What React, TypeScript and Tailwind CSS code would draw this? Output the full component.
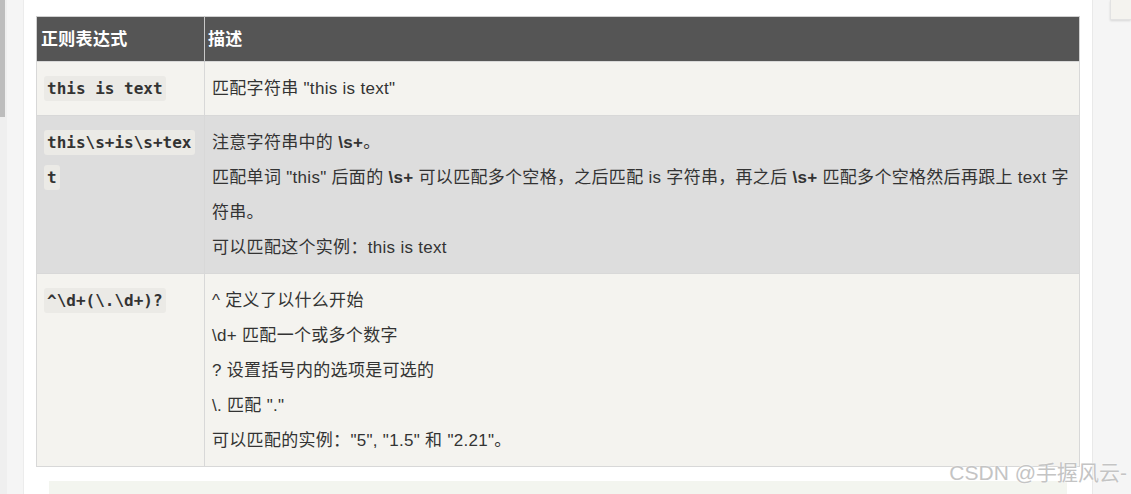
import type { ReactNode } from 'react';

const cjk = "font-['Liberation_Sans','Noto_Sans_CJK_SC',sans-serif]";

function Code({ children }: { children: ReactNode }) {
  return (
    <code className="rounded-[3px] bg-[#ebeae6] px-[3px] py-[3px] font-['DejaVu_Sans_Mono',monospace] text-[16px] font-bold tracking-normal text-[#333] [box-decoration-break:clone]">
      {children}
    </code>
  );
}

function B({ children }: { children: ReactNode }) {
  return <strong className="font-bold">{children}</strong>;
}

export default function App() {
  return (
    <div className={`relative flex h-[494px] w-[1131px] overflow-hidden bg-white ${cjk}`}>
      {/* left gutter with scrollbar */}
      <div className="flex w-[24px] shrink-0">
        <div className="w-[7px] bg-[#efefef]">
          <div className="h-[117px] w-[5px] bg-[#bdbdbd]" />
        </div>
        <div className="flex-1 border-r border-[#ececec] bg-[#f5f5f5]" />
      </div>

      {/* article */}
      <main className="min-w-0 flex-1 px-[12px]">
        <div className="h-[16px] overflow-hidden">
          <p className="-mt-[22px] pl-[4px] text-[16px] leading-[24px] text-[#333]">
            下表列出了一些正则表达式的实例及描述：
          </p>
        </div>

        <table className="w-full table-fixed border-collapse border border-[#d0d0d0] text-[17px] tracking-[0.3px] text-[#333]">
          <colgroup>
            <col className="w-[168px]" />
            <col />
          </colgroup>
          <thead>
            <tr className="h-[45px] bg-[#555555] text-left text-[17px] font-bold text-white">
              <th className="border-r border-[#c8c8c8] px-[4px] pt-[2px]">正则表达式</th>
              <th className="px-[3px] pt-[2px]">描述</th>
            </tr>
          </thead>
          <tbody className="leading-[35px]">
            <tr className="bg-[#f4f3ef]">
              <td className="border border-[#d8d8d8] px-[7px] py-[9px] align-top">
                <Code>this is text</Code>
              </td>
              <td className="border border-[#d8d8d8] px-[7px] py-[9px] align-top">匹配字符串 "this is text"</td>
            </tr>
            <tr className="bg-[#dddddd]">
              <td className="break-all border border-[#d8d8d8] pb-[8px] pl-[7px] pr-[10px] pt-[9px] align-top">
                <Code>this\s+is\s+text</Code>
              </td>
              <td className="border border-[#d8d8d8] px-[7px] pb-[8px] pt-[9px] align-top">
                <p>
                  注意字符串中的 <B>\s+</B>。
                </p>
                <p>
                  匹配单词 "this" 后面的 <B>\s+</B> 可以匹配多个空格，之后匹配 is 字符串，再之后 <B>\s+</B> 匹配多个空格然后再跟上 text 字符串。
                </p>
                <p>可以匹配这个实例：this is text</p>
              </td>
            </tr>
            <tr className="bg-[#f4f3ef]">
              <td className="border border-[#d8d8d8] px-[7px] pb-[8px] pt-[9px] align-top">
                <Code>^\d+(\.\d+)?</Code>
              </td>
              <td className="border border-[#d8d8d8] px-[7px] pb-[8px] pt-[9px] align-top">
                <p>^ 定义了以什么开始</p>
                <p>\d+ 匹配一个或多个数字</p>
                <p>? 设置括号内的选项是可选的</p>
                <p>\. 匹配 "."</p>
                <p>可以匹配的实例："5", "1.5" 和 "2.21"。</p>
              </td>
            </tr>
          </tbody>
        </table>

        <div className="mx-[13px] mt-[14px] h-[40px] bg-[#f3f5ef]" />
      </main>

      {/* right rail */}
      <aside className="w-[39px] shrink-0 border-l border-[#e9e9e9] bg-[#f5f5f5] pl-[17px]">
        <div className="h-[20px] w-full border-b border-l border-[#e2e2e2] bg-[#f4f3ef] shadow-[0_1px_2px_rgba(0,0,0,0.12)]" />
      </aside>

      {/* watermark */}
      <div className="absolute right-[4px] top-[459px] text-[21px] leading-[28px] text-[#c4c4c4] [text-shadow:0_0_1px_#fff,0_0_2px_#fff]">
        CSDN @手握风云-
      </div>
    </div>
  );
}
